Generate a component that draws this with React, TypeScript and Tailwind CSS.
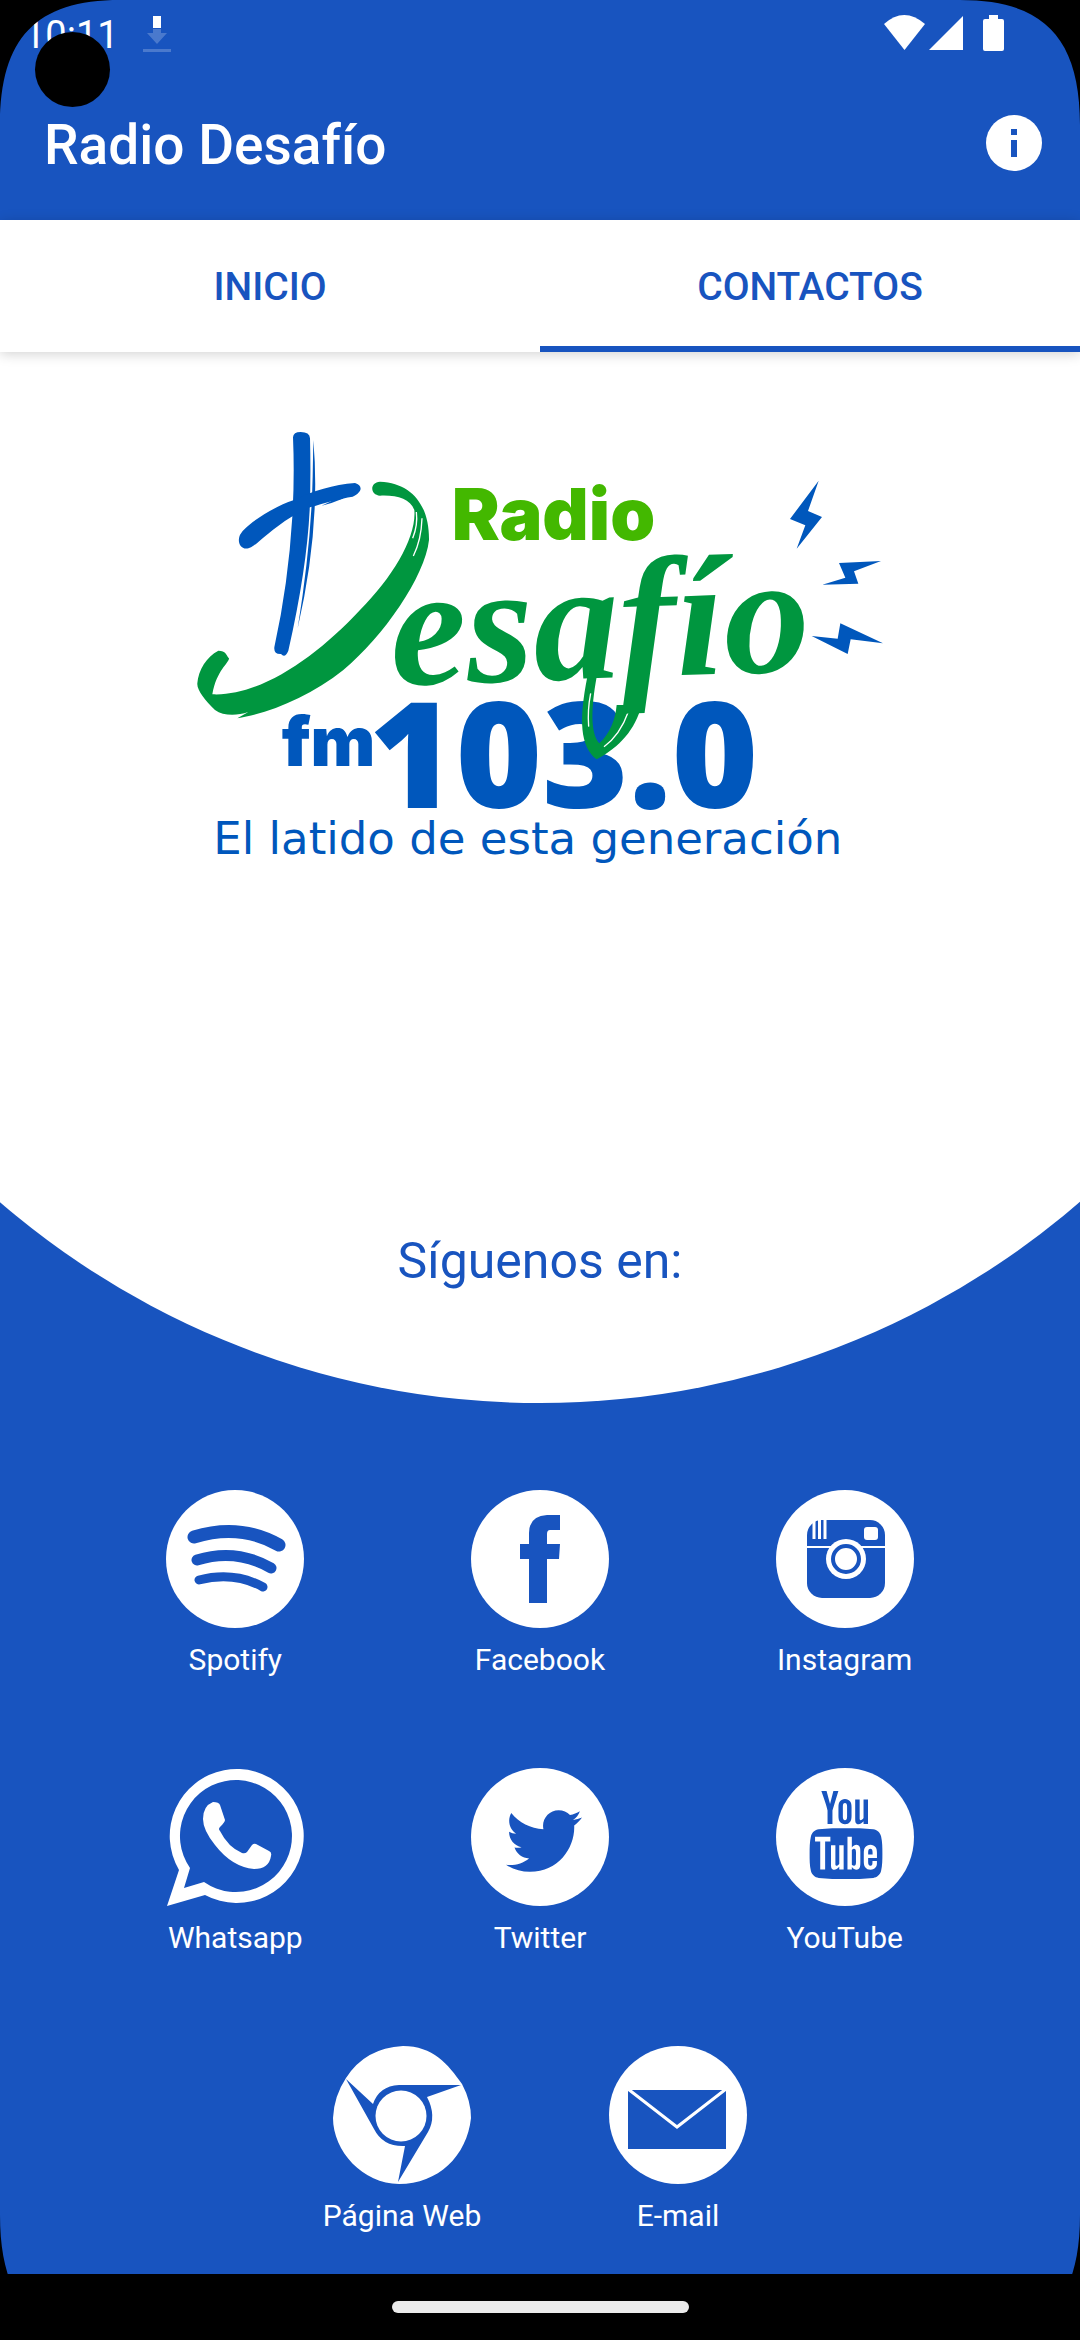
import React from 'react';
import { TfiYoutube } from 'react-icons/tfi';
import { FaTwitter } from 'react-icons/fa';

const BLUE = '#1854bf';

function StatusBar() {
  return (
    <div className="flex h-[66px] items-start justify-between pt-3 pl-6 pr-[76px]">
      <div className="flex items-start gap-6">
        <span className="text-[38px] leading-[46px]">10:11</span>
        <svg viewBox="0 0 28 36" className="mt-1 h-9 w-7" aria-label="Descarga" role="img">
          <path d="M10 13h8v4h6L14 28 4 17h6zM0 33h28v3H0z" fill="#fff" opacity=".22" />
          <path d="M10 0h8v12h-8z" fill="#fff" />
        </svg>
      </div>
      <svg viewBox="0 0 120 36" className="mt-[3px] h-9 w-[120px]" fill="#fff" aria-label="Wi-Fi, señal y batería" role="img">
        <path d="M0 9Q20-9 41 9L20.500 35z" />
        <path d="M45 35L79 1v34z" />
        <path d="M105 0h9v4h4q2 0 2 2v28q0 2-2 2h-17q-2 0-2-2V6q0-2 2-2h4z" />
      </svg>
    </div>
  );
}

function AppBar() {
  return (
    <header className="flex h-[154px] items-center justify-between pl-11 pr-[38px]">
      <h1 className="pt-1 text-[55px] leading-16 font-medium">Radio Desafío</h1>
      <button type="button" aria-label="Información">
        <svg viewBox="0 0 56 56" className="h-14 w-14">
          <circle cx="28" cy="28" r="28" fill="#fff" />
          <path d="M25 14h6v6h-6zM25 25h6v17h-6z" fill={BLUE} />
        </svg>
      </button>
    </header>
  );
}

function Tabs() {
  return (
    <nav role="tablist" className="relative z-10 grid h-33 grid-cols-2 bg-white text-[39px] font-medium text-[#1854bf] shadow-[0_2px_12px_rgba(0,0,0,0.18)]">
      <button type="button" role="tab" aria-selected="false" className="border-b-6 border-transparent pt-2">INICIO</button>
      <button type="button" role="tab" aria-selected="true" className="border-b-6 border-[#1854bf] pt-2">CONTACTOS</button>
    </nav>
  );
}

function Logo() {
  return (
    <svg viewBox="0 0 2160 1380" className="w-2/3" role="img" aria-label="Radio Desafío fm 103.0, El latido de esta generación">
      <g fill="#0057bc">
        <path d="M339 82Q340 66 362 66Q389 66 390 85Q393 200 389 300Q380 480 325 722Q315 746 303 732Q281 733 283 712Q325 520 337 320Q344 200 339 82Z" />
        <path d="M400 90Q423 350 353 655Q394 400 398 200Z" />
        <path d="M178 380C185 350 280 290 340 271C400 242 460 224 525 219C548 226 549 245 518 260C480 266 430 280 390 292L335 320C270 360 235 400 213 412C185 425 172 400 178 380Z" />
        <path d="M425 287Q460 268 495 258L488 266Q460 278 425 287Z" />
        <path d="M1916 212L1884 303L1926 321L1850 416L1876 346L1830 327Z" />
        <path d="M1977 459L2103 453L2022 484L2035 521L1927 524L1996 503Z" />
        <path d="M1981 640L2109 700L2012 688L2003 732L1895 678L1973 686Z" />
      </g>
      <path d="M600 215C700 220 748 290 747 390C735 500 610 680 490 780C390 860 260 912 172 925L205 906C170 918 130 918 105 900C75 872 50 840 52 820C55 780 80 740 115 722C138 722 138 735 147 745C147 760 110 780 97 853C240 860 410 740 540 600C640 500 710 380 703 300C690 265 650 255 600 257C570 255 568 217 600 215Z" fill="#00963f" />
      <path d="M709 306Q714 345 698 385M726 325Q724 390 700 438" fill="none" stroke="#fff" strokeWidth="4" />
      <text x="815" y="391" fill="#43b800" className="font-[Inter,sans-serif] text-[216px] font-black">Radio</text>
      <g fill="#0057bc">
        <text x="305" y="1067" className="font-[Inter,sans-serif] text-[206px] font-black">fm</text>
        <text x="566" y="1195" className="font-[Open_Sans,sans-serif] text-[444px] font-extrabold">103.0</text>
        <text x="100" y="1333" className="font-[DejaVu_Sans,sans-serif] text-[135px]">El latido de esta generación</text>
      </g>
      <path d="M1310 885L1385 885C1365 960 1320 1010 1250 1048C1200 1010 1196 930 1222 800L1250 800C1232 900 1232 970 1258 1000C1290 970 1306 930 1310 885Z" fill="#00963f" />
      <path d="M1345 905Q1320 975 1272 1010M1226 950Q1222 900 1232 850" fill="none" stroke="#fff" strokeWidth="4" />
      <text x="636" y="826" fill="#00963f" transform="rotate(-2 636 826)" className="font-[Liberation_Serif,serif] text-[515px] font-bold italic">esafío</text>
    </svg>
  );
}

function Disc({ children }: { children: React.ReactNode }) {
  return (
    <>
      <circle cx="69" cy="69" r="69" fill="#fff" />
      {children}
    </>
  );
}

const spotify = (
  <Disc>
    <g fill="none" stroke={BLUE} strokeLinecap="round">
      <path d="M28 47Q74 33 113 55" strokeWidth="13" />
      <path d="M31 70Q70 58 105 78" strokeWidth="11" />
      <path d="M33 90Q68 81 97 97" strokeWidth="9" />
    </g>
  </Disc>
);

const facebook = (
  <Disc>
    <path d="M58 113V69h-9V54h9V43q0-17 18-18h13v15H79q-3 0-3 4v10h13l-1 15H76v44z" fill={BLUE} />
  </Disc>
);

const instagram = (
  <Disc>
    <rect x="31" y="30" width="78" height="78" rx="15" fill={BLUE} />
    <path d="M38 31v18M43.500 30v19M49 30v19" stroke="#fff" strokeWidth="3" />
    <rect x="88" y="37" width="14" height="13" rx="3" fill="#fff" />
    <path d="M31 57h78" stroke="#fff" strokeWidth="2" />
    <circle cx="70" cy="69" r="20" fill="#fff" />
    <circle cx="70" cy="69" r="13" fill="none" stroke={BLUE} strokeWidth="4" />
  </Disc>
);

const whatsapp = (
  <>
    <path d="M1 138L13 102A67 67 0 1 1 39 127ZM18 120L38 114A56 56 0 1 0 24 100Z" fill="#fff" fillRule="evenodd" />
    <path d="M47 34q6 0 7 3l5 15q0 2-5 7q-2 2 0 4q8 16 22 22q3 1 5-1l5-7q2-2 4-1l13 7q3 1 2 5q-2 13-17 13q-22-2-39-24Q37 62 37 51q0-13 10-17z" fill="#fff" />
  </>
);

const twitter = (
  <Disc>
    <FaTwitter x="35" y="35" size="76" color={BLUE} />
  </Disc>
);

const youtube = (
  <Disc>
    <TfiYoutube x="26" y="23" size="88" color={BLUE} />
  </Disc>
);

const web = (
  <>
    <path d="M70 0C100 0 115 18 129 38Q138 55 138 72C134 110 105 138 66 138C30 138 0 105 0 72Q1 50 13 32Q32 2 70 0Z" fill="#fff" />
    <path d="M13 33L40 58Q46 40 66 39H128L94 51Q104 70 95 86L65 136L72 100Q50 101 41 83Z" fill={BLUE} />
    <circle cx="68" cy="70" r="25.500" fill="#fff" />
  </>
);

const email = (
  <Disc>
    <path d="M19 44h98v59H19z" fill={BLUE} />
    <path d="M19 43L68 81L117 43" fill="none" stroke="#fff" strokeWidth="3" />
  </Disc>
);

function Social({ label, icon }: { label: string; icon: React.ReactNode }) {
  return (
    <a href="#" className="flex flex-col items-center gap-3 text-[30px] leading-10">
      <svg viewBox="0 0 138 138" className="h-[138px] w-[138px]" aria-hidden="true">{icon}</svg>
      {label}
    </a>
  );
}

function Corner({ className }: { className: string }) {
  return (
    <svg viewBox="0 0 120 125" className={className} aria-hidden="true">
      <path d="M0 0H120C36 0 0 38 0 125Z" />
    </svg>
  );
}

export default function App() {
  return (
    <div className="relative flex min-h-screen flex-col overflow-hidden bg-[#1854bf] font-[Roboto,sans-serif] text-white">
      <StatusBar />
      <AppBar />
      <Tabs />
      <main className="flex flex-1 flex-col">
        <section className="relative flex flex-col overflow-hidden pt-[58px] pb-28">
          <div className="absolute bottom-0 left-1/2 aspect-square w-[153%] -translate-x-1/2 rounded-full bg-white" />
          <div className="relative flex w-full flex-col items-center gap-[361px]">
            <Logo />
            <h2 className="text-[50px] leading-15 text-[#1854bf]">Síguenos en:</h2>
          </div>
        </section>
        <div className="flex flex-1 flex-col gap-22 pt-[87px] pb-8">
          <div className="grid grid-cols-3 gap-y-22 px-[83px]">
            <Social label="Spotify" icon={spotify} />
            <Social label="Facebook" icon={facebook} />
            <Social label="Instagram" icon={instagram} />
            <Social label="Whatsapp" icon={whatsapp} />
            <Social label="Twitter" icon={twitter} />
            <Social label="YouTube" icon={youtube} />
          </div>
          <div className="grid grid-cols-2 px-[264px]">
            <Social label="Página Web" icon={web} />
            <Social label="E-mail" icon={email} />
          </div>
        </div>
      </main>
      <footer className="flex h-[66px] items-center justify-center bg-black">
        <div className="h-3 w-[297px] rounded-full bg-[#ebebeb]" />
      </footer>
      <Corner className="absolute top-0 left-0 w-30" />
      <Corner className="absolute top-0 right-0 w-30 -scale-x-100" />
      <Corner className="absolute bottom-0 left-0 w-30 -scale-y-100" />
      <Corner className="absolute right-0 bottom-0 w-30 -scale-100" />
      <div className="absolute top-8 left-[35px] h-[75px] w-[75px] rounded-full bg-black" />
    </div>
  );
}
